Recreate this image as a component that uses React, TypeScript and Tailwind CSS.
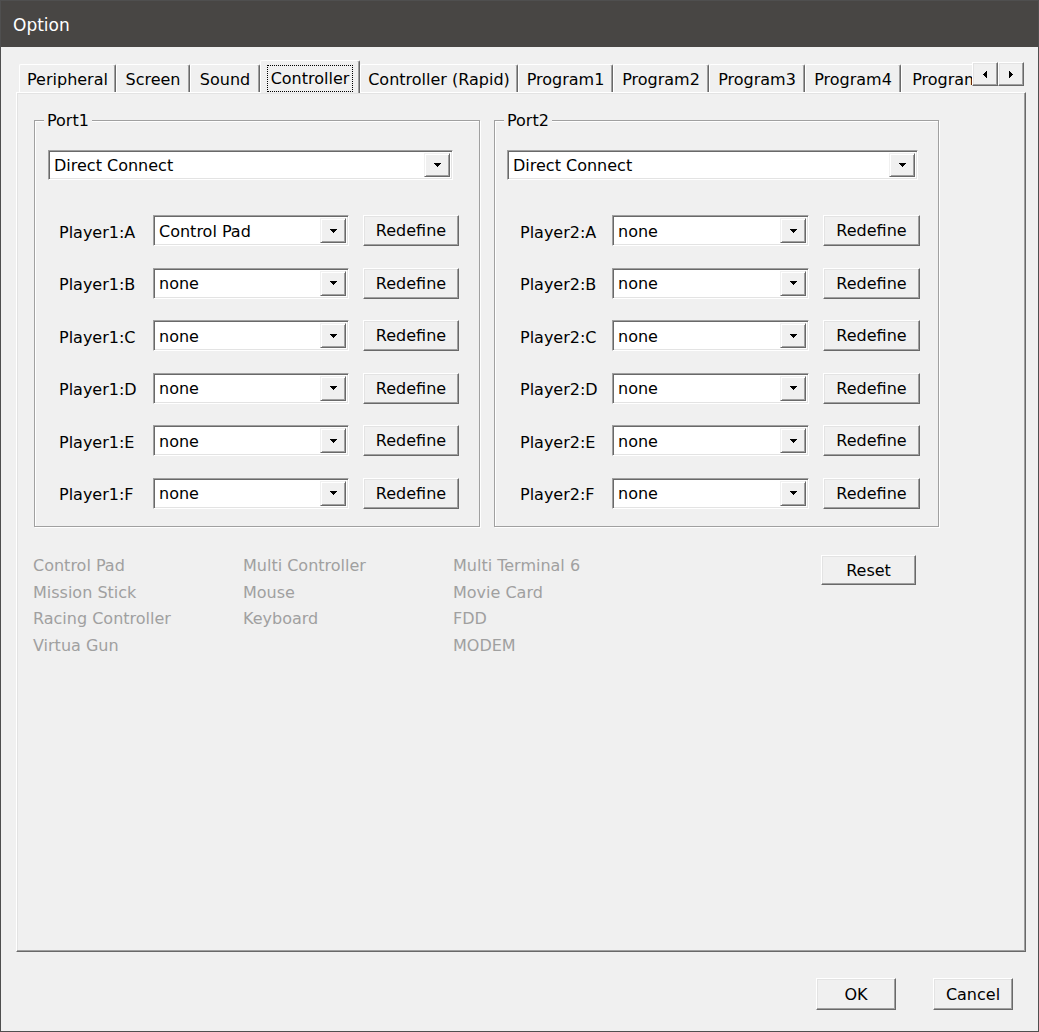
import React from "react";

const DownArrow = () => (
  <svg width="7" height="4" viewBox="0 0 7 4" shapeRendering="crispEdges">
    <path d="M0 0h7v1h-1v1h-1v1h-1v1h-1v-1h-1v-1h-1v-1h-1z" fill="#000" />
  </svg>
);

const LeftArrow = () => (
  <svg width="4" height="7" viewBox="0 0 4 7" shapeRendering="crispEdges">
    <path d="M4 0v7h-1v-1h-1v-1h-1v-1h-1v-1h1v-1h1v-1h1v-1z" fill="#000" />
  </svg>
);

const RightArrow = () => (
  <svg width="4" height="7" viewBox="0 0 4 7" shapeRendering="crispEdges">
    <path d="M0 0v7h1v-1h1v-1h1v-1h1v-1h-1v-1h-1v-1h-1v-1z" fill="#000" />
  </svg>
);

function Button({ children, className }: { children: React.ReactNode; className: string }) {
  return (
    <div
      className={
        "flex items-center justify-center bg-[#f0f0f0] border border-t-white border-l-white border-r-[#696969] border-b-[#696969] shadow-[inset_-1px_-1px_0_#a0a0a0,inset_1px_1px_0_#e3e3e3] text-[16px] text-black " +
        className
      }
    >
      {children}
    </div>
  );
}

function Combo({ value, className }: { value: string; className: string }) {
  return (
    <div
      className={
        "flex bg-white border border-t-[#a0a0a0] border-l-[#a0a0a0] border-r-white border-b-white shadow-[inset_1px_1px_0_#696969,inset_-1px_-1px_0_#e3e3e3] p-[2px] " +
        className
      }
    >
      <div className="flex-1 flex items-center pl-[3px] pt-[2px] text-[16px] text-black whitespace-nowrap overflow-hidden">
        {value}
      </div>
      <div className="w-[26px] flex items-center justify-center bg-[#f0f0f0] border border-t-[#f0f0f0] border-l-[#f0f0f0] border-r-[#696969] border-b-[#696969] shadow-[inset_1px_1px_0_white,inset_-1px_-1px_0_#a0a0a0]">
        <DownArrow />
      </div>
    </div>
  );
}

const tabs: { label: string; w: string; selected?: boolean }[] = [
  { label: "Peripheral", w: "w-[97px]" },
  { label: "Screen", w: "w-[74px]" },
  { label: "Sound", w: "w-[70px]" },
  { label: "Controller", w: "w-[100px]", selected: true },
  { label: "Controller (Rapid)", w: "w-[158px]" },
  { label: "Program1", w: "w-[95px]" },
  { label: "Program2", w: "w-[96px]" },
  { label: "Program3", w: "w-[96px]" },
  { label: "Program4", w: "w-[96px]" },
  { label: "Program5", w: "w-[100px]" },
];

function Port({
  name,
  player,
  values,
  pad,
  comboW,
  labelCls,
  rowComboW,
  btnW,
  width,
}: {
  name: string;
  player: string;
  values: string[];
  pad: string;
  comboW: string;
  labelCls: string;
  rowComboW: string;
  btnW: string;
  width: string;
}) {
  const letters = ["A", "B", "C", "D", "E", "F"];
  return (
    <fieldset
      className={
        "border border-[#a0a0a0] shadow-[1px_1px_0_white,inset_1px_1px_0_white] h-[417px] m-0 p-0 " + width
      }
    >
      <legend className="ml-[9px] px-[3px] text-[16px] leading-[20px] bg-[#f0f0f0] text-black">
        <span className="relative top-[1px]">{name}</span>
      </legend>
      <div className={pad}>
        <Combo value="Direct Connect" className={"mt-[20px] h-[30px] " + comboW} />
        <div className="mt-[35px] flex flex-col gap-[21.5px]">
          {letters.map((l, i) => (
            <div key={l} className="flex items-center h-[31px]">
              <div className={"w-[105px] text-[16px] text-black pt-[4px] whitespace-nowrap " + labelCls}>
                {player}:{l}
              </div>
              <Combo value={values[i]} className={"h-[31px] " + rowComboW} />
              <Button className={"ml-[14px] h-[31px] pt-[1px] " + btnW}>Redefine</Button>
            </div>
          ))}
        </div>
      </div>
    </fieldset>
  );
}

export default function App() {
  const devices = [
    "Control Pad",
    "Multi Controller",
    "Multi Terminal 6",
    "Mission Stick",
    "Mouse",
    "Movie Card",
    "Racing Controller",
    "Keyboard",
    "FDD",
    "Virtua Gun",
    "",
    "MODEM",
  ];
  return (
    <div className="w-[1039px] h-[1032px] flex flex-col border border-[#4f4f4f] bg-[#f0f0f0] font-['DejaVu_Sans','Noto_Sans',sans-serif] overflow-hidden">
      <div className="h-[46px] bg-[#484644] flex items-center pl-[12px] pt-[3px] text-white text-[17px] shrink-0">
        Option
      </div>
      <div className="pt-[13px] pl-[15px]">
        <div className="flex h-[32px] pl-[3px]">
          <div className="w-[953px] overflow-x-clip flex items-end">
            {tabs.map((t) =>
              t.selected ? (
                <div
                  key={t.label}
                  className={
                    "relative z-10 h-[33px] -mb-px shrink-0 flex items-start justify-center pt-[4px] bg-[#f0f0f0] border-t border-l border-r border-t-white border-l-white border-r-[#696969] shadow-[inset_-1px_0_0_#a0a0a0] rounded-t-[2px] text-[16px] text-black " +
                    t.w
                  }
                >
                  <span className="px-[3px] pt-[1px] leading-[24px] border border-dotted border-black">{t.label}</span>
                </div>
              ) : (
                <div
                  key={t.label}
                  className={
                    "h-[28px] shrink-0 flex items-center justify-center bg-[#f0f0f0] border-t border-l border-r border-t-white border-l-white border-r-[#696969] shadow-[inset_-1px_0_0_#a0a0a0] rounded-t-[2px] text-[16px] text-black whitespace-nowrap pt-[3px] " +
                    t.w
                  }
                >
                  {t.label}
                </div>
              )
            )}
          </div>
          <div className="flex mt-[2px] h-[24px]">
            <Button className="w-[26px] h-[24px]">
              <LeftArrow />
            </Button>
            <Button className="w-[26px] h-[24px]">
              <RightArrow />
            </Button>
          </div>
        </div>
        <div className="w-[1010px] h-[860px] border border-t-white border-l-white border-r-[#696969] border-b-[#696969] shadow-[inset_-1px_-1px_0_#a0a0a0,inset_1px_1px_0_#e3e3e3] pt-[17px] pl-[17px]">
          <div className="flex gap-[14px]">
            <Port
              name="Port1"
              player="Player1"
              values={["Control Pad", "none", "none", "none", "none", "none"]}
              pad="pl-[13px]"
              comboW="w-[405px]"
              labelCls="pl-[11px]"
              rowComboW="w-[196px]"
              btnW="w-[96px]"
              width="w-[446px]"
            />
            <Port
              name="Port2"
              player="Player2"
              values={["none", "none", "none", "none", "none", "none"]}
              pad="pl-[12px]"
              comboW="w-[411px]"
              labelCls="pl-[13px]"
              rowComboW="w-[197px]"
              btnW="w-[97px]"
              width="w-[445px]"
            />
          </div>
          <div className="flex mt-[26px]">
            <div className="w-[788px] grid grid-cols-[210px_210px_210px] leading-[26.5px] text-[16px] text-[#a0a0a0] -ml-[1px]">
              {devices.map((d, i) => (
                <div key={i} className="h-[26.5px] whitespace-nowrap">
                  {d}
                </div>
              ))}
            </div>
            <Button className="w-[95px] h-[30px] mt-[2px] pt-[2px]">Reset</Button>
          </div>
        </div>
        <div className="flex justify-end gap-[37px] pr-[25px] mt-[26px]">
          <Button className="w-[80px] h-[32px] pt-[2px]">OK</Button>
          <Button className="w-[80px] h-[32px] pt-[2px]">Cancel</Button>
        </div>
      </div>
    </div>
  );
}
